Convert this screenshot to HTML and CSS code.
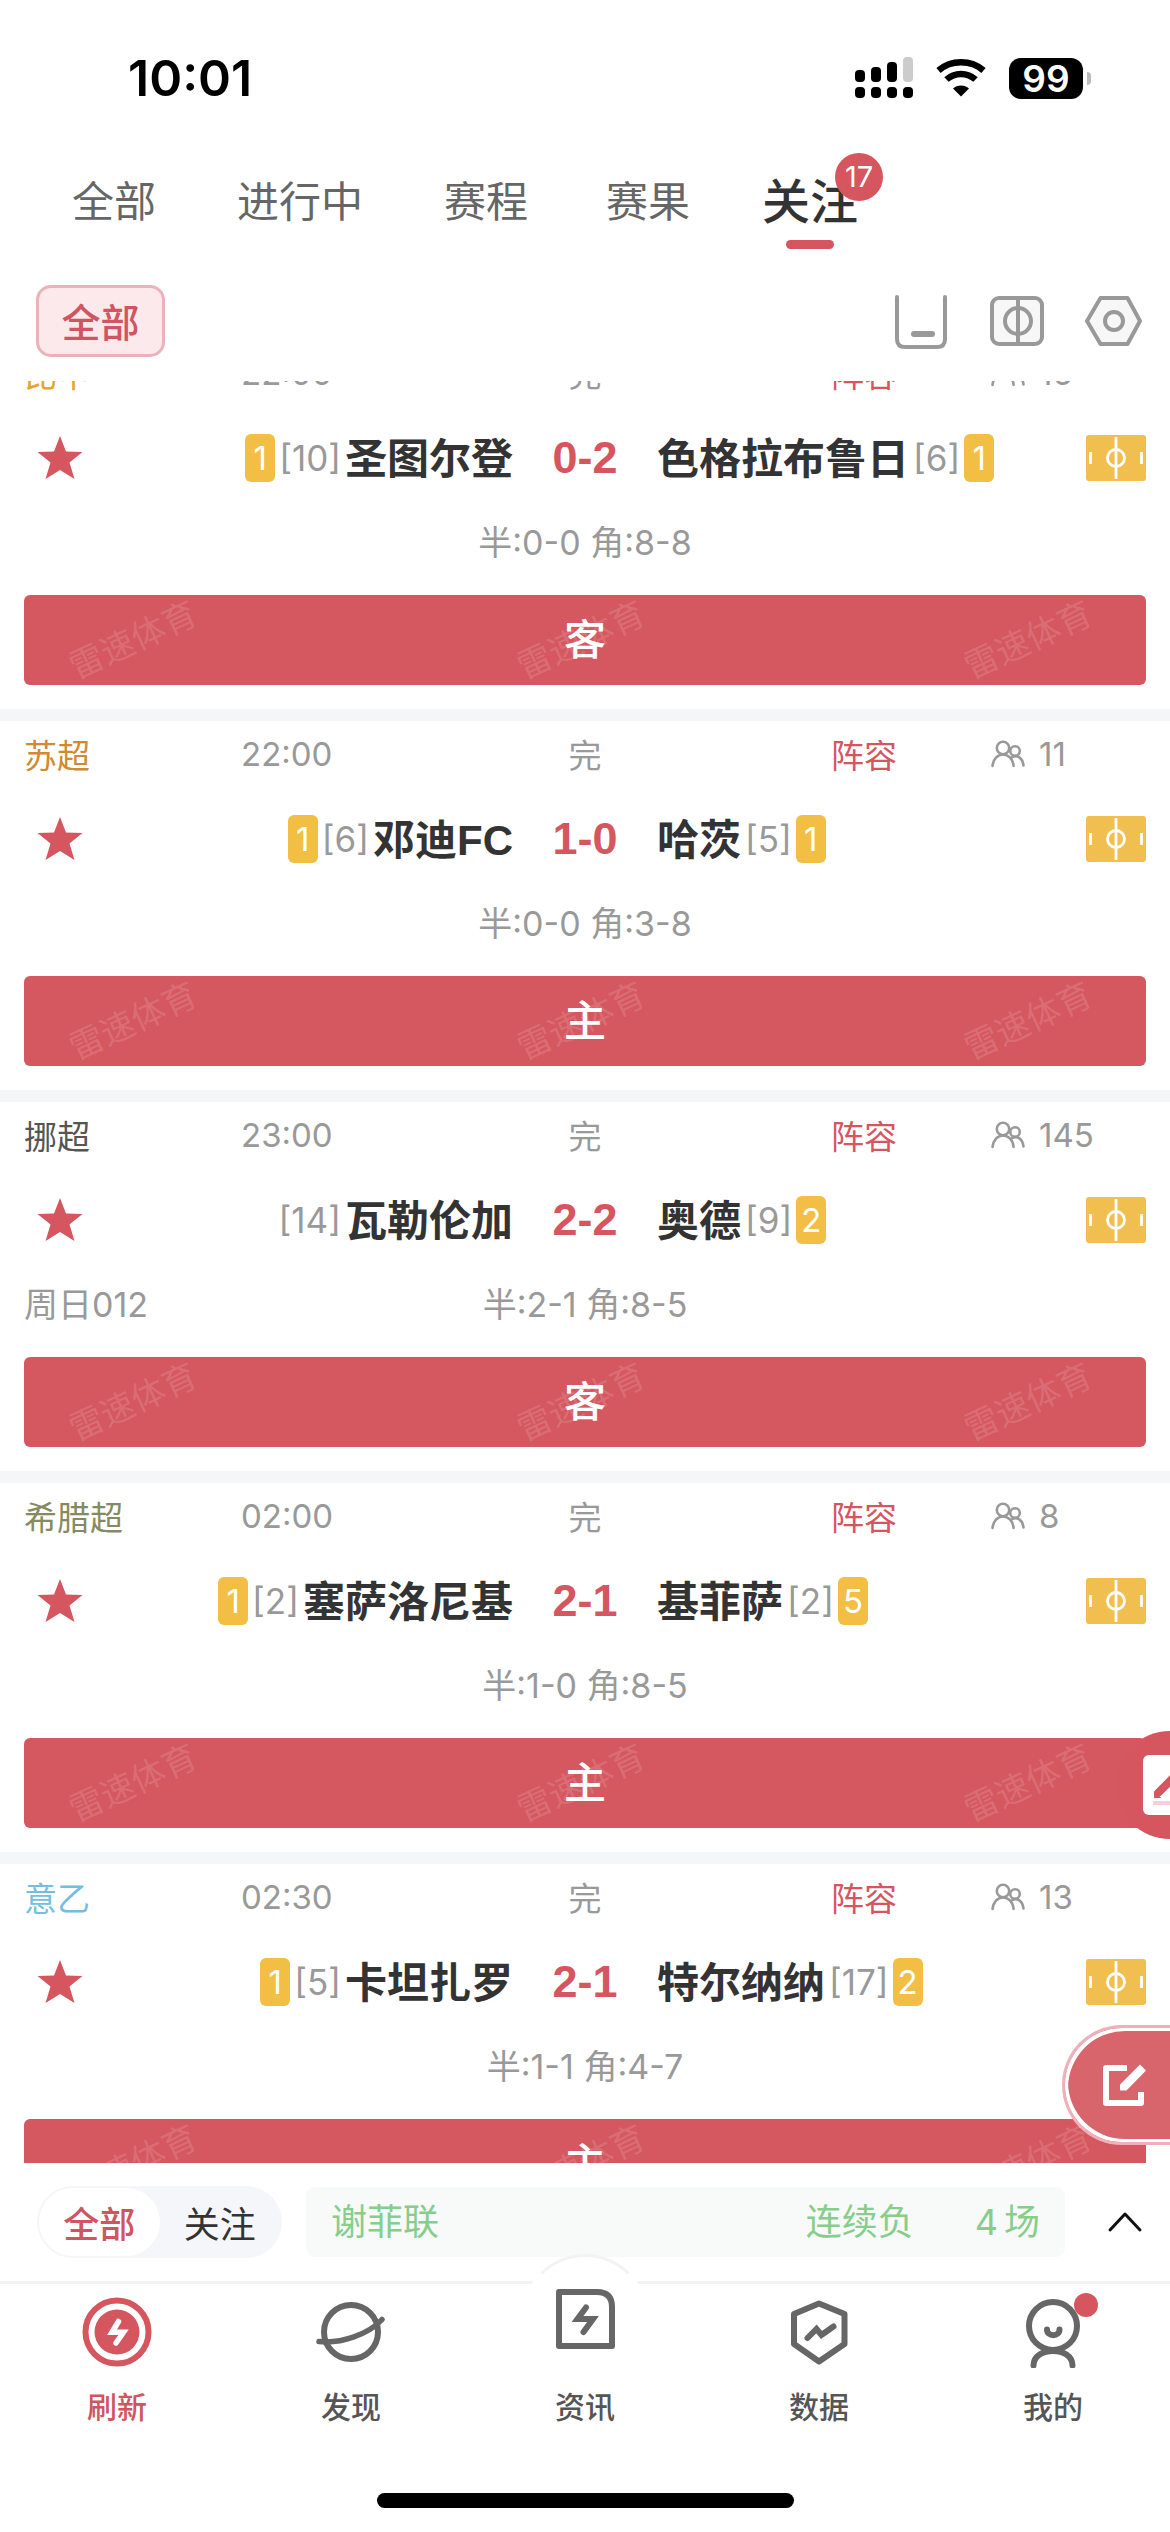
FILE: index.html
```html
<!DOCTYPE html>
<html lang="zh-CN">
<head>
<meta charset="utf-8">
<meta name="viewport" content="width=device-width, initial-scale=1">
<title>关注</title>
<link rel="stylesheet" href="styles.css">
</head>
<body>
<svg class="sprite" aria-hidden="true">
  <symbol id="i-star" viewBox="0 0 46 46"><path d="M23 1l6 15.500 16.500.6-13 10.400 5 16.500L23 35 8.500 44l5-16.500L.5 17.100l16.500-.6z" fill="currentColor"/></symbol>
  <symbol id="i-field" viewBox="0 0 60 46"><rect width="60" height="46" rx="3" fill="#f1bf50"/><g fill="none" stroke="#fff" stroke-width="2.800"><path d="M30 2v42M4.500 17v12M55.500 17v12"/><circle cx="30" cy="23" r="8.500"/></g></symbol>
  <symbol id="i-fans" viewBox="0 0 34 28"><g fill="none" stroke="#999" stroke-width="2.600" stroke-linecap="round"><circle cx="12" cy="8" r="6.200"/><circle cx="24" cy="11" r="4.800"/><path d="M1.500 26c.8-7 5-11.500 10.500-11.500S22 19 22.600 26M20.500 17.500c6-3.500 11 .5 12 8"/></g></symbol>
</svg>
<div class="app">
  <header>
    <div class="status">
      <time class="status-time">10:01</time>
      <div class="status-icons">
        <svg width="58" height="42" viewBox="0 0 58 42"><rect y="13" width="10" height="12" rx="4"/><rect x="16" y="10" width="10" height="15" rx="4"/><rect x="32" y="5" width="10" height="20" rx="4"/><rect x="48" width="10" height="25" rx="4" fill="#ccc"/><rect y="30" width="10" height="11" rx="4"/><rect x="16" y="30" width="10" height="11" rx="4"/><rect x="32" y="30" width="10" height="11" rx="4"/><rect x="48" y="30" width="10" height="11" rx="4"/></svg>
        <svg width="50" height="38" viewBox="0 0 50 38"><g fill="none" stroke="#000" stroke-width="6.500"><path d="M2.500 11.500C15 .5 35 .5 47.500 11.500"/><path d="M10.500 20.500c8-7.500 21-7.500 29 0"/></g><path d="M25 37.500l-8-8c4-4 12-4 16 0z"/></svg>
        <span class="battery">99</span>
      </div>
    </div>
    <nav class="tabs">
      <a class="tab" href="#all">全部</a>
      <a class="tab tab-wide" href="#live">进行中</a>
      <a class="tab" href="#schedule">赛程</a>
      <a class="tab" href="#results">赛果</a>
      <a class="tab tab-active" href="#follow" aria-current="page"><span class="tab-label">关注<span class="tab-badge">17</span></span></a>
    </nav>
    <div class="filters">
      <button class="chip" type="button">全部</button>
      <div class="tools">
        <button type="button" aria-label="收起"><svg width="60" height="60" viewBox="0 0 60 60"><g fill="none" stroke="#999" stroke-width="4" stroke-linecap="round"><path d="M6 6v42q0 8 8 8h32q8 0 8-8V6"/><path d="M23 43h18" stroke-width="6"/></g></svg></button>
        <button type="button" aria-label="球场"><svg width="60" height="60" viewBox="0 0 60 60"><g fill="#f7f7f7" stroke="#999" stroke-width="4"><rect x="5" y="7" width="50" height="46" rx="7"/><path d="M31 7v46"/><circle cx="31" cy="30" r="13" fill="none"/></g></svg></button>
        <button type="button" aria-label="设置"><svg width="60" height="60" viewBox="0 0 60 60"><g fill="#f7f7f7" stroke="#999" stroke-width="4" stroke-linejoin="round"><path d="M17.500 7h27L57 30 44.500 53h-27L4 30z"/><circle cx="31" cy="30" r="9"/></g></svg></button>
      </div>
    </div>
  </header>

  <main class="feed">
    <ul class="matches">
      <li class="match">
        <div class="meta"><span class="league league-bel">比甲</span><time>22:00</time><span class="state">完</span><a class="lineup" href="#lineup">阵容</a><span class="fans"><svg><use href="#i-fans"/></svg>16</span></div>
        <div class="teams">
          <div class="side home"><button class="star" type="button" aria-label="取消关注"><svg><use href="#i-star"/></svg></button><span class="card">1</span><span class="rank">[10]</span><b>圣图尔登</b></div>
          <strong class="score">0-2</strong>
          <div class="side away"><b>色格拉布鲁日</b><span class="rank">[6]</span><span class="card">1</span><svg class="field"><use href="#i-field"/></svg></div>
        </div>
        <div class="detail"><span></span><span>半:0-0 角:8-8</span></div>
        <div class="pick"><div class="marks" aria-hidden="true"><i>雷速体育</i><i>雷速体育</i><i>雷速体育</i></div><span>客</span></div>
      </li>
      <li class="match">
        <div class="meta"><span class="league league-sco">苏超</span><time>22:00</time><span class="state">完</span><a class="lineup" href="#lineup">阵容</a><span class="fans"><svg><use href="#i-fans"/></svg>11</span></div>
        <div class="teams">
          <div class="side home"><button class="star" type="button" aria-label="取消关注"><svg><use href="#i-star"/></svg></button><span class="card">1</span><span class="rank">[6]</span><b>邓迪FC</b></div>
          <strong class="score">1-0</strong>
          <div class="side away"><b>哈茨</b><span class="rank">[5]</span><span class="card">1</span><svg class="field"><use href="#i-field"/></svg></div>
        </div>
        <div class="detail"><span></span><span>半:0-0 角:3-8</span></div>
        <div class="pick"><div class="marks" aria-hidden="true"><i>雷速体育</i><i>雷速体育</i><i>雷速体育</i></div><span>主</span></div>
      </li>
      <li class="match">
        <div class="meta"><span class="league league-nor">挪超</span><time>23:00</time><span class="state">完</span><a class="lineup" href="#lineup">阵容</a><span class="fans"><svg><use href="#i-fans"/></svg>145</span></div>
        <div class="teams">
          <div class="side home"><button class="star" type="button" aria-label="取消关注"><svg><use href="#i-star"/></svg></button><span class="rank">[14]</span><b>瓦勒伦加</b></div>
          <strong class="score">2-2</strong>
          <div class="side away"><b>奥德</b><span class="rank">[9]</span><span class="card">2</span><svg class="field"><use href="#i-field"/></svg></div>
        </div>
        <div class="detail"><span>周日012</span><span>半:2-1 角:8-5</span></div>
        <div class="pick"><div class="marks" aria-hidden="true"><i>雷速体育</i><i>雷速体育</i><i>雷速体育</i></div><span>客</span></div>
      </li>
      <li class="match">
        <div class="meta"><span class="league league-gre">希腊超</span><time>02:00</time><span class="state">完</span><a class="lineup" href="#lineup">阵容</a><span class="fans"><svg><use href="#i-fans"/></svg>8</span></div>
        <div class="teams">
          <div class="side home"><button class="star" type="button" aria-label="取消关注"><svg><use href="#i-star"/></svg></button><span class="card">1</span><span class="rank">[2]</span><b>塞萨洛尼基</b></div>
          <strong class="score">2-1</strong>
          <div class="side away"><b>基菲萨</b><span class="rank">[2]</span><span class="card">5</span><svg class="field"><use href="#i-field"/></svg></div>
        </div>
        <div class="detail"><span></span><span>半:1-0 角:8-5</span></div>
        <div class="pick"><div class="marks" aria-hidden="true"><i>雷速体育</i><i>雷速体育</i><i>雷速体育</i></div><span>主</span></div>
      </li>
      <li class="match">
        <div class="meta"><span class="league league-ita">意乙</span><time>02:30</time><span class="state">完</span><a class="lineup" href="#lineup">阵容</a><span class="fans"><svg><use href="#i-fans"/></svg>13</span></div>
        <div class="teams">
          <div class="side home"><button class="star" type="button" aria-label="取消关注"><svg><use href="#i-star"/></svg></button><span class="card">1</span><span class="rank">[5]</span><b>卡坦扎罗</b></div>
          <strong class="score">2-1</strong>
          <div class="side away"><b>特尔纳纳</b><span class="rank">[17]</span><span class="card">2</span><svg class="field"><use href="#i-field"/></svg></div>
        </div>
        <div class="detail"><span></span><span>半:1-1 角:4-7</span></div>
        <div class="pick"><div class="marks" aria-hidden="true"><i>雷速体育</i><i>雷速体育</i><i>雷速体育</i></div><span>主</span></div>
      </li>
    </ul>
    <div class="floats">
      <button class="float-note" type="button" aria-label="笔记"><svg width="54" height="108" viewBox="0 0 54 108"><rect x="27" y="24" width="60" height="60" rx="6" fill="#fff"/><path d="M42 62L64 40" stroke="#d5565f" stroke-width="8" stroke-linecap="round"/><path d="M38 60v7h7z" fill="#d5565f"/><path d="M37 72h40" stroke="#f8cfd6" stroke-width="4"/></svg></button>
      <button class="float-edit" type="button" aria-label="发帖"><svg width="48" height="48" viewBox="0 0 48 48"><path d="M28 7H7v35h35V31" fill="none" stroke="#fff" stroke-width="6" stroke-linejoin="round"/><path d="M41 3.500l6 6L27.500 29.500H21v-6z" fill="#fff"/></svg></button>
    </div>
  </main>

  <section class="ticker">
    <div class="segment">
      <button class="segment-on" type="button">全部</button>
      <button type="button">关注</button>
    </div>
    <a class="news" href="#streak"><span class="news-team">谢菲联</span><span>连续负</span><span class="news-count"><span>4</span><span>场</span></span></a>
    <button class="expand" type="button" aria-label="展开"><svg width="36" height="24" viewBox="0 0 36 24"><path d="M3 20L18 4l15 16" fill="none" stroke="#111" stroke-width="3" stroke-linecap="round" stroke-linejoin="round"/></svg></button>
  </section>

  <footer class="dock">
    <nav class="dock-items">
      <a class="dock-item dock-on" href="#refresh"><svg width="72" height="72" viewBox="0 0 72 72"><circle cx="36" cy="36" r="31.500" fill="none" stroke="#d5565f" stroke-width="6"/><circle cx="36" cy="36" r="22.500" fill="#d5565f"/><path d="M37.500 25.500L31 36.200H42.500L35 47" fill="none" stroke="#fff" stroke-width="5.500" stroke-linecap="round"/></svg>刷新</a>
      <a class="dock-item" href="#discover"><svg width="72" height="72" viewBox="0 0 72 72"><g fill="none" stroke="#666" stroke-width="6" stroke-linecap="round"><circle cx="36" cy="36" r="27"/><path d="M4 45.500C26 48 54 38 67 23.500" stroke-width="5.500"/></g></svg>发现</a>
      <a class="dock-item" href="#news"><span class="bulge"><svg width="60" height="60" viewBox="0 0 60 60"><path d="M4 3h38q15 0 15 15v39H4z" fill="none" stroke="#666" stroke-width="6" stroke-linejoin="round"/><path d="M31 18.500L22.500 30H38L28.500 43" fill="none" stroke="#666" stroke-width="6" stroke-linecap="round"/></svg></span>资讯</a>
      <a class="dock-item" href="#data"><svg width="72" height="72" viewBox="0 0 72 72"><g fill="none" stroke="#666" stroke-width="6" stroke-linejoin="round" stroke-linecap="round"><path d="M36 7.500L61.500 18v30L36 65.500 11 48V18z"/><path d="M24.500 42L33.500 33l5 6L50.500 30.500" stroke-linejoin="miter"/></g></svg>数据</a>
      <a class="dock-item" href="#me"><span class="me"><svg width="72" height="72" viewBox="0 0 72 72"><g fill="none" stroke="#666" stroke-width="6" stroke-linecap="round"><circle cx="36" cy="30" r="24"/><path d="M30 33.500C30 41 42.500 41 42.500 33.500"/><path d="M16.500 69.500C16.500 50 55.500 50 55.500 69.500"/></g></svg><span class="dot"></span></span>我的</a>
    </nav>
    <div class="home-bar"></div>
  </footer>
</div>
</body>
</html>
```

FILE: styles.css
```css
* { box-sizing: border-box; }

body {
  margin: 0;
  background: #fff;
  color: #333;
  font-family: Inter, "Noto Sans CJK SC", sans-serif;
  font-size: 33px;
}

a { color: inherit; text-decoration: none; }
button { padding: 0; border: 0; background: none; color: inherit; font: inherit; cursor: pointer; }
svg { display: block; flex: none; }
.sprite { position: absolute; width: 0; height: 0; }

.app { display: flex; flex-direction: column; height: 100vh; }

/* status bar */
.status {
  display: flex;
  align-items: center;
  justify-content: space-between;
  height: 156px;
  padding: 0 87px 0 128px;
}
.status-time { color: #000; font-size: 50px; font-weight: 600; }
.status-icons { display: flex; align-items: center; gap: 23px; }
.battery {
  position: relative;
  width: 74px;
  height: 41px;
  border-radius: 12px;
  background: #000;
  color: #fff;
  font-size: 37px;
  font-weight: 600;
  line-height: 41px;
  text-align: center;
}
.battery::after {
  content: "";
  position: absolute;
  top: 14px;
  right: -8px;
  width: 4px;
  height: 13px;
  border-radius: 0 4px 4px 0;
  background: #bbb;
}

/* tabs */
.tabs { display: flex; padding: 16px 33px 0; }
.tab { width: 162px; color: #666; font-size: 42px; line-height: 60px; text-align: center; }
.tab-wide { width: 210px; }
.tab-active { color: #333; font-size: 48px; font-weight: 500; }
.tab-active::after {
  content: "";
  display: block;
  width: 48px;
  height: 9px;
  margin: 8px auto 0;
  border-radius: 5px;
  background: #d5565f;
}
.tab-label { position: relative; display: block; width: 96px; margin: 0 auto; }
.tab-badge {
  position: absolute;
  top: -19px;
  right: -25px;
  width: 48px;
  height: 48px;
  border-radius: 50%;
  background: #d5565f;
  color: #fff;
  font-size: 29px;
  font-weight: 400;
  line-height: 48px;
}

.filters { display: flex; align-items: center; justify-content: space-between; padding: 36px 27px 24px 36px; }
.chip {
  width: 129px;
  height: 72px;
  padding-bottom: 3px;
  border: 3px solid #e9b3bb;
  border-radius: 15px;
  background: #fbe9ec;
  color: #cf5560;
  font-size: 39px;
  font-weight: 500;
}
.tools { display: flex; gap: 36px; }

/* match list */
.feed { position: relative; flex: 1; min-height: 0; overflow: hidden; }
.matches { margin: -41px 0 0; padding: 0; list-style: none; }
.match { padding-bottom: 24px; border-bottom: 12px solid #f5f6f8; }

.meta {
  display: grid;
  grid-template-columns: 217fr 98fr 492fr 160fr 155fr;
  align-items: center;
  height: 66px;
  padding: 0 24px;
  color: #999;
  white-space: nowrap;
}
.state { text-align: center; }
.lineup { color: #d5565f; }
.fans { display: flex; align-items: center; gap: 14px; }
.fans svg { width: 34px; height: 28px; }
.league-bel { color: #e3a534; }
.league-sco { color: #d2892f; }
.league-nor { color: #555; }
.league-gre { color: #868a62; }
.league-ita { color: #74bfe0; }

.teams { display: grid; grid-template-columns: 1fr 144px 1fr; align-items: center; height: 104px; white-space: nowrap; }
.side { display: flex; align-items: center; gap: 4px; }
.side b {
  padding-bottom: 5px;
  font-family: "Liberation Sans", "Noto Sans CJK SC", sans-serif;
  font-size: 42px;
  font-weight: 600;
}
.home { padding-left: 37px; }
.away { padding-right: 24px; }
.star { margin-right: auto; color: #d5565f; }
.star svg { width: 46px; height: 46px; }
.field { width: 60px; height: 46px; margin-left: auto; }
.rank { color: #999; font-size: 35px; }
.card {
  width: 30px;
  height: 48px;
  border-radius: 6px;
  background: #f2bf44;
  color: #fff;
  font-size: 33px;
  line-height: 48px;
  text-align: center;
}
.score { color: #d5565f; font-family: "Liberation Sans", Arial, sans-serif; font-size: 45px; text-align: center; }

.detail {
  display: grid;
  grid-template-columns: 1fr auto 1fr;
  align-items: center;
  height: 60px;
  margin-bottom: 25px;
  padding: 0 24px;
  color: #999;
  font-size: 34px;
}

.pick {
  position: relative;
  height: 90px;
  margin: 0 24px;
  overflow: hidden;
  border-radius: 6px;
  background: #d5575f;
  color: #fff;
  font-size: 42px;
  font-weight: 500;
  line-height: 90px;
  text-align: center;
}
.pick > span { position: relative; }
.marks {
  position: absolute;
  inset: 0;
  display: flex;
  align-items: center;
  justify-content: space-between;
  padding: 0 50px 0 41px;
}
.marks i {
  color: rgba(255, 255, 255, .15);
  font-size: 34px;
  font-style: normal;
  font-weight: 400;
  line-height: 40px;
  transform: rotate(-25deg);
}

.floats {
  position: absolute;
  right: 0;
  bottom: 18px;
  display: flex;
  flex-direction: column;
  align-items: flex-end;
  gap: 186px;
}
.float-note { width: 54px; height: 108px; border-radius: 54px 0 0 54px; background: #d5565f; overflow: hidden; }
.float-edit {
  width: 108px;
  height: 120px;
  padding-left: 34px;
  border: 3px solid #f0b0ba;
  border-right: 0;
  border-radius: 60px 0 0 60px;
  background: #d8656c;
  box-shadow: inset 3px 3px #fff, inset 3px -3px #fff;
}

/* streak ticker */
.ticker { display: flex; align-items: center; height: 118px; padding: 0 21px 0 37px; font-size: 36px; }
.segment { display: flex; width: 245px; height: 72px; padding: 2px; border-radius: 36px; background: #f5f6f9; }
.segment button { flex: 1; border-radius: 34px; }
.segment .segment-on { background: #fff; color: #cf5560; font-weight: 500; }
.news {
  display: flex;
  flex: 1;
  align-items: baseline;
  height: 70px;
  margin: 0 36px 0 24px;
  padding: 0 25px;
  border-radius: 9px;
  background: #f8faf9;
  color: #87cd8c;
  line-height: 70px;
}
.news-team { flex: 1; }
.news-count { display: flex; align-items: baseline; gap: 6px; margin-left: 61px; }
.expand { padding: 6px; }

/* bottom navigation */
.dock { height: 251px; border-top: 3px solid #f3f3f3; }
.dock-items { display: flex; height: 209px; padding-top: 12px; }
.dock-item {
  display: flex;
  flex: 1;
  flex-direction: column;
  align-items: center;
  gap: 19px;
  color: #555;
  font-size: 30px;
  font-weight: 500;
  line-height: 40px;
}
.dock-on { color: #cf5560; }
.bulge {
  display: flex;
  align-items: center;
  justify-content: center;
  width: 126px;
  height: 126px;
  margin: -42px 0 -12px;
  padding-top: 4px;
  border: 3px solid transparent;
  border-top-color: #f3f3f3;
  border-radius: 50%;
  background: #fff;
}
.me { position: relative; }
.dot { position: absolute; top: -3px; right: -9px; width: 24px; height: 24px; border-radius: 50%; background: #d5565f; }
.home-bar { width: 417px; height: 15px; margin: 0 auto; border-radius: 8px; background: #000; }
```
